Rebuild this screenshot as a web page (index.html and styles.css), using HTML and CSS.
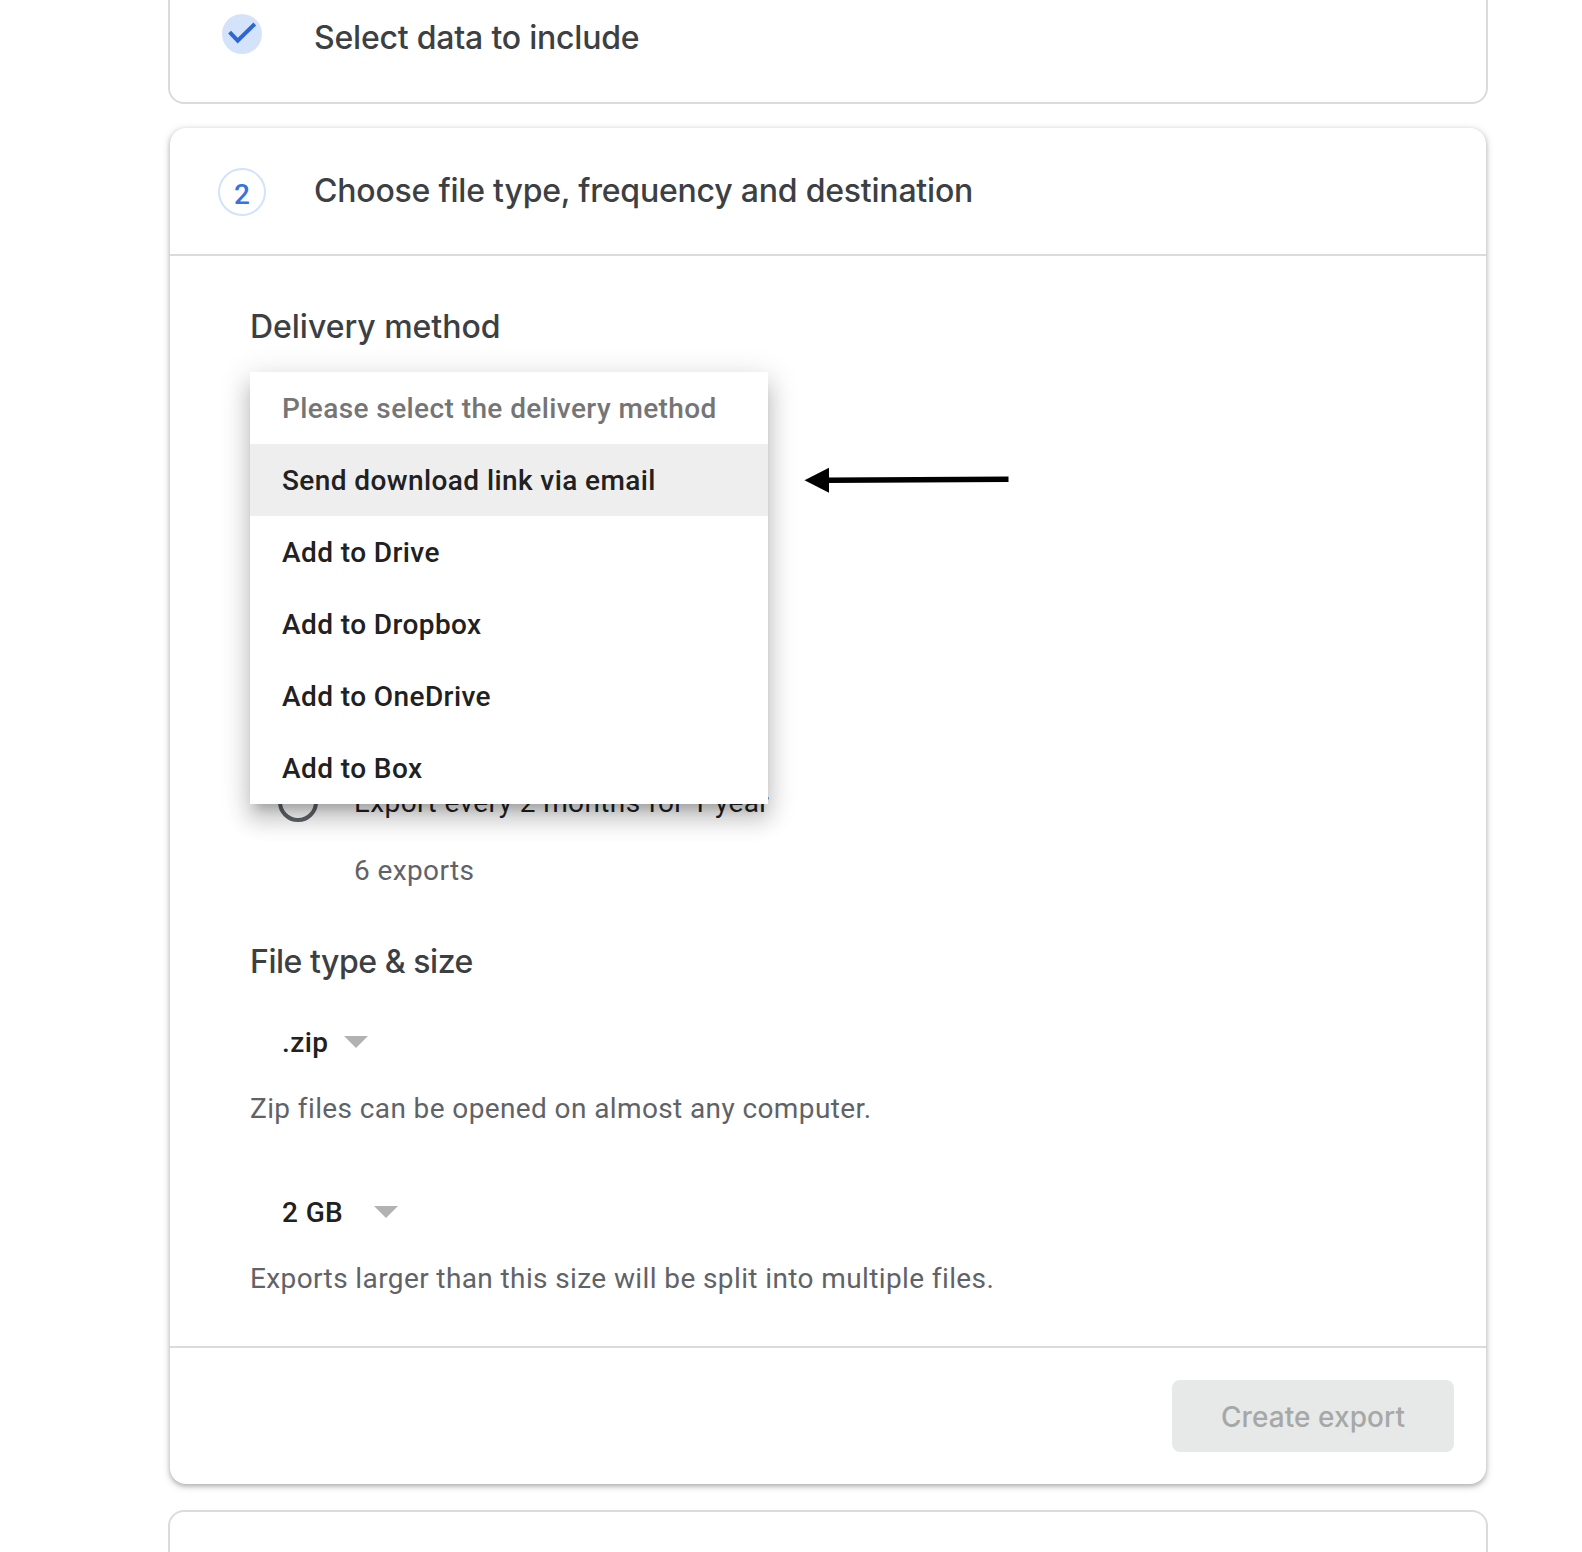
FILE: index.html
```html
<!DOCTYPE html>
<html lang="en">
<head>
<meta charset="utf-8">
<title>Export your data</title>
<link rel="stylesheet" href="styles.css">
</head>
<body>
<main class="steps">
  <section class="card card-done">
    <span class="badge-done">
      <svg class="check" viewBox="0 0 40 40" aria-hidden="true"><path d="M7.6 18.2 15.7 26.6 32.8 10"/></svg>
    </span>
    <h2 class="step-title">Select data to include</h2>
  </section>

  <section class="card card-active">
    <header class="step-header">
      <span class="badge-number">2</span>
      <h2 class="step-title">Choose file type, frequency and destination</h2>
    </header>
    <div class="step-body">
      <h3 class="field-title">Delivery method</h3>
      <div class="delivery-field">
        <ul class="menu">
          <li class="menu-item placeholder">Please select the delivery method</li>
          <li class="menu-item selected">Send download link via email</li>
          <li class="menu-item">Add to Drive</li>
          <li class="menu-item">Add to Dropbox</li>
          <li class="menu-item">Add to OneDrive</li>
          <li class="menu-item">Add to Box</li>
        </ul>
        <svg class="pointer" viewBox="0 0 206 28" aria-hidden="true">
          <path d="M.5 14.3 25 1.8v25z"/>
          <path d="M24 11.6 204.5 10.4v5.6L24 17.1z"/>
        </svg>
      </div>
      <div class="option">
        <span class="radio"></span>
        <span class="option-label">Export every 2 months for 1 year</span>
      </div>
      <p class="option-note">6 exports</p>

      <h3 class="field-title file-title">File type &amp; size</h3>
      <div class="select">
        <span class="select-value">.zip</span>
        <svg class="caret" viewBox="0 0 24 12" aria-hidden="true"><path d="M0 0h24L12 12z"/></svg>
      </div>
      <p class="hint">Zip files can be opened on almost any computer.</p>
      <div class="select select-size">
        <span class="select-value">2 GB</span>
        <svg class="caret" viewBox="0 0 24 12" aria-hidden="true"><path d="M0 0h24L12 12z"/></svg>
      </div>
      <p class="hint">Exports larger than this size will be split into multiple files.</p>
    </div>
    <footer class="step-footer">
      <button class="create" disabled>Create export</button>
    </footer>
  </section>

  <section class="card card-next"></section>
</main>
</body>
</html>
```
FILE: styles.css
```css
* {
  box-sizing: border-box;
}

body {
  margin: 0;
  background: #fff;
  color: #212121;
  font: 400 28px/40px Roboto, sans-serif;
  letter-spacing: 0.39px;
}

h2, h3, p, ul {
  margin: 0;
  padding: 0;
}

.steps {
  width: 1320px;
  margin-left: 168px;
}

.card {
  background: #fff;
  border: 2px solid #dadbe0;
  border-radius: 16px;
}

.card-done {
  display: flex;
  align-items: flex-start;
  height: 104px;
  padding: 14px 52px 0;
  border-top: 0;
  border-radius: 0 0 16px 16px;
}

.badge-done {
  display: flex;
  width: 40px;
  height: 40px;
  border-radius: 50%;
  background: #d5e3fa;
}

.check {
  width: 40px;
  height: 40px;
  fill: none;
  stroke: #2d66d0;
  stroke-width: 4;
}

.step-title,
.field-title {
  color: #3c4043;
  font: 500 32px/40px Inter, sans-serif;
  letter-spacing: -0.21px;
}

.card-done .step-title {
  margin: 4px 0 0 52px;
}

.card-active {
  margin: 24px 2px 0;
  border: 0;
  box-shadow: 0 2px 4px rgba(60, 64, 67, 0.3), 0 2px 6px 2px rgba(60, 64, 67, 0.15);
}

.step-header {
  display: flex;
  align-items: flex-start;
  height: 128px;
  padding: 40px 48px 0;
  border-bottom: 2px solid #dadbe0;
}

.badge-number {
  width: 48px;
  height: 48px;
  padding-top: 3px;
  border: 2px solid #d2e3fc;
  border-radius: 50%;
  color: #3474e0;
  font-weight: 500;
  line-height: 44px;
  letter-spacing: 0;
  text-align: center;
}

.step-header .step-title {
  margin: 3px 0 0 48px;
}

.step-body {
  padding: 51px 80px 47px;
}

.step-body .field-title {
  letter-spacing: -0.03px;
}

.delivery-field {
  position: relative;
  height: 410px;
  margin-top: 25px;
}

.menu {
  position: absolute;
  z-index: 1;
  top: 0;
  left: 0;
  width: 518px;
  background: #fff;
  list-style: none;
  box-shadow:
    0 10px 10px -6px rgba(0, 0, 0, 0.2),
    0 16px 20px 2px rgba(0, 0, 0, 0.14),
    0 6px 28px 4px rgba(0, 0, 0, 0.12);
}

.menu-item {
  padding: 2px 0 0 32px;
  font-weight: 500;
  line-height: 70px;
  letter-spacing: 0.41px;
}

.menu-item.placeholder {
  color: #757575;
}

.menu-item.selected {
  background: #eee;
}

.pointer {
  position: absolute;
  top: 94px;
  left: 554px;
  width: 206px;
  height: 28px;
  fill: #000;
}

.option {
  display: flex;
  gap: 36px;
  height: 40px;
  padding-left: 28px;
}

.option-label {
  line-height: 42px;
}

.radio {
  width: 40px;
  height: 40px;
  border: 4px solid #5f6368;
  border-radius: 50%;
}

.option-note {
  margin: 29px 0 0 104px;
  color: #5f6368;
}

.step-body .file-title {
  margin-top: 51px;
  letter-spacing: -0.46px;
}

.select {
  display: flex;
  align-items: center;
  height: 72px;
  margin-top: 24px;
  padding-left: 32px;
  font-weight: 500;
}

.select-value {
  width: 62px;
  padding-top: 2px;
}

.select-size {
  margin-top: 47px;
}

.select-size .select-value {
  width: 92px;
}

.caret {
  width: 24px;
  height: 12px;
  fill: #b2b2b2;
}

.hint {
  margin-top: 11px;
  color: #5f6368;
}

.step-footer {
  display: flex;
  justify-content: flex-end;
  padding: 32px;
  border-top: 2px solid #dadbe0;
}

.create {
  width: 282px;
  height: 72px;
  padding: 2px 0 0;
  border: 0;
  border-radius: 8px;
  background: #e6e9e8;
  color: #a6a8a7;
  font: 500 28px/70px Inter, sans-serif;
  letter-spacing: 0.07px;
}

.card-next {
  height: 42px;
  margin-top: 26px;
  border-bottom: 0;
  border-radius: 16px 16px 0 0;
}
```
